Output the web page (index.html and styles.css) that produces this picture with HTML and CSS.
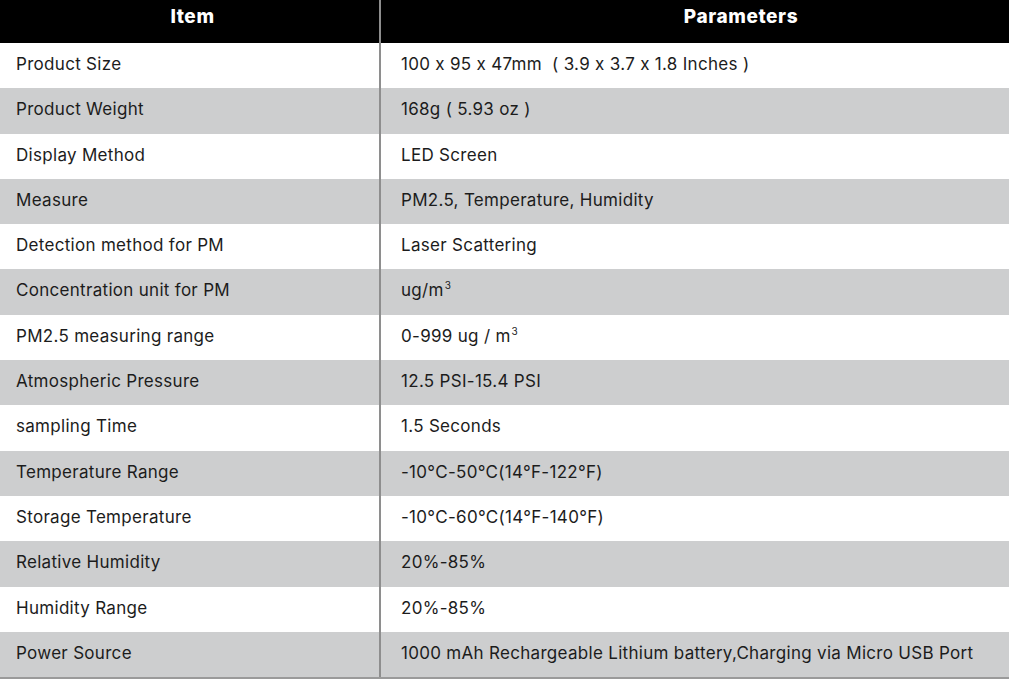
FILE: index.html
```html
<!DOCTYPE html>
<html>
<head>
<meta charset="utf-8">
<link rel="stylesheet" href="styles.css">
</head>
<body>
<div class="spec">
  <div class="row head">
    <div class="cell item">Item</div>
    <div class="cell param">Parameters</div>
  </div>
  <div class="row"><div class="cell item">Product Size</div><div class="cell param">100 x 95 x 47mm&nbsp; ( 3.9 x 3.7 x 1.8 Inches )</div></div>
  <div class="row alt"><div class="cell item">Product Weight</div><div class="cell param">168g ( 5.93 oz )</div></div>
  <div class="row"><div class="cell item">Display Method</div><div class="cell param">LED Screen</div></div>
  <div class="row alt"><div class="cell item">Measure</div><div class="cell param">PM2.5, Temperature, Humidity</div></div>
  <div class="row"><div class="cell item">Detection method for PM</div><div class="cell param">Laser Scattering</div></div>
  <div class="row alt"><div class="cell item">Concentration unit for PM</div><div class="cell param">ug/m<sup>3</sup></div></div>
  <div class="row"><div class="cell item">PM2.5 measuring range</div><div class="cell param">0-999 ug / m<sup>3</sup></div></div>
  <div class="row alt"><div class="cell item">Atmospheric Pressure</div><div class="cell param">12.5 PSI-15.4 PSI</div></div>
  <div class="row"><div class="cell item">sampling Time</div><div class="cell param">1.5 Seconds</div></div>
  <div class="row alt"><div class="cell item">Temperature Range</div><div class="cell param">-10°C-50°C(14°F-122°F)</div></div>
  <div class="row"><div class="cell item">Storage Temperature</div><div class="cell param">-10°C-60°C(14°F-140°F)</div></div>
  <div class="row alt"><div class="cell item">Relative Humidity</div><div class="cell param">20%-85%</div></div>
  <div class="row"><div class="cell item">Humidity Range</div><div class="cell param">20%-85%</div></div>
  <div class="row alt last"><div class="cell item">Power Source</div><div class="cell param">1000 mAh Rechargeable Lithium battery,Charging via Micro USB Port</div></div>
</div>
</body>
</html>
```
FILE: styles.css
```css
html, body {
  margin: 0;
  padding: 0;
  background: #fff;
  overflow: hidden;
}
body {
  width: 1009px;
  height: 682px;
  font-family: "Inter", "Lato", sans-serif;
  font-feature-settings: "calt" 0;
  color: #1c1c1c;
}
.spec {
  width: 1101px;
  display: flex;
  flex-direction: column;
  border-bottom: 2px solid #9a9a9a;
}
.row {
  display: grid;
  grid-template-columns: 379px 2px 720px;
  height: 45.3px;
  font-size: 17px;
  letter-spacing: 0.3px;
}
.row .item { grid-column: 1; }
.row .param { grid-column: 3; }
.row::before {
  content: "";
  grid-column: 2;
  grid-row: 1;
  background: #8e8e8e;
}
.cell {
  white-space: nowrap;
  line-height: 42px;
}
.row .item { padding-left: 16px; }
.row .param { padding-left: 20px; }
.alt { background: #cdcecf; }
.head {
  height: 43px;
  background: #000;
  color: #fff;
  font-weight: 800;
  font-size: 19px;
  letter-spacing: 0.6px;
}
.head .cell { text-align: center; line-height: 34px; }
.head .item { padding-left: 6px; }
.head .param { padding-left: 0; }
sup {
  font-size: 10px;
  vertical-align: 7px;
  line-height: 0;
  margin-left: 1px;
}
```
